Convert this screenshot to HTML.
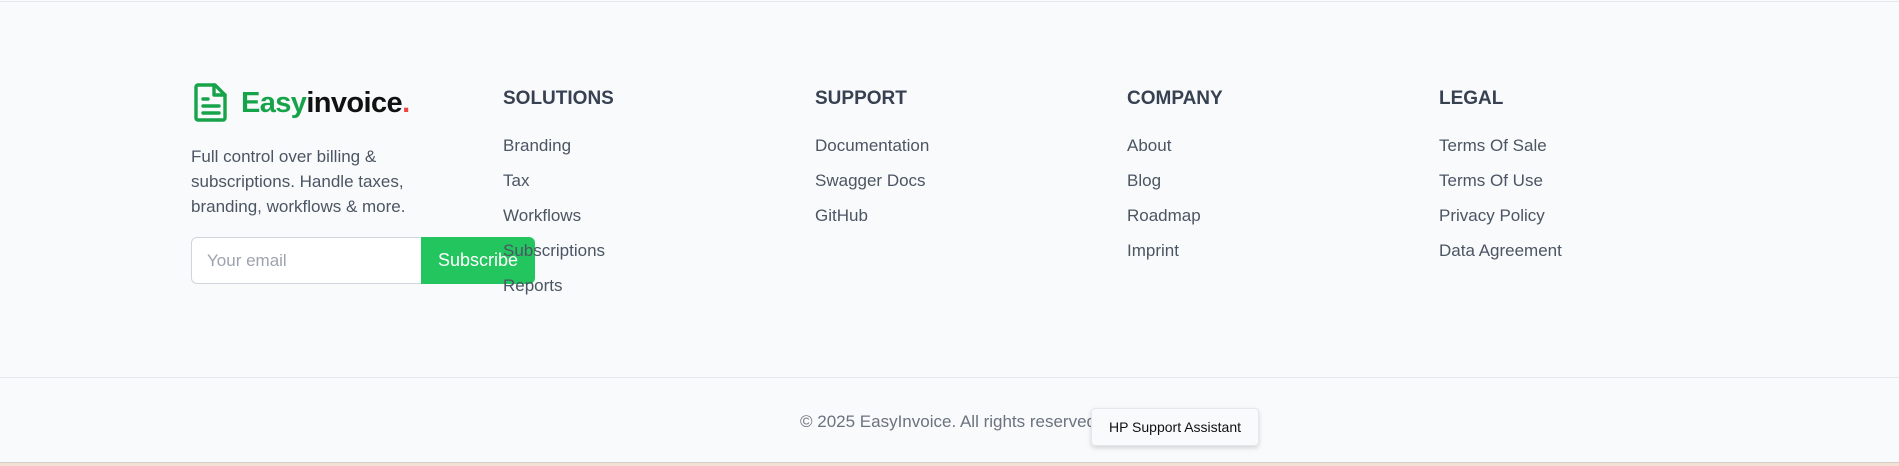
<!DOCTYPE html>
<html><head><meta charset="utf-8"><style>
*{margin:0;padding:0;box-sizing:border-box}
body{width:1899px;height:466px;background:#f9fafb;font-family:"Liberation Sans",sans-serif;position:relative;overflow:hidden;color:#4b5563}
.a{position:absolute;white-space:nowrap}
.h{font-size:19px;font-weight:bold;color:#374151;top:88px}
.i{font-size:17px;color:#4b5563;line-height:20px}
</style></head><body>
<div class="a" style="left:0;top:1px;width:1899px;height:1px;background:#e5e7eb"></div>
<svg class="a" style="left:194px;top:82px" width="34" height="40" viewBox="0 0 34 40" fill="none" stroke="#16a34a" stroke-width="3.4" stroke-linejoin="round" stroke-linecap="round"><path d="M4 3h17l10 10v23a2 2 0 0 1-2 2H4a2 2 0 0 1-2-2V5a2 2 0 0 1 2-2z"/><path d="M20 3v10h11"/><path d="M9 17h5M9 24h16M9 31h16"/></svg>
<div class="a" style="left:241px;top:87px;font-size:29px;font-weight:bold;letter-spacing:-0.6px"><span style="color:#16a34a">Easy</span><span style="color:#111">invoice</span><span style="color:#ef4444">.</span></div>
<div class="a" style="left:191px;top:144px;font-size:17px;line-height:25px;color:#4b5563">Full control over billing &amp;<br>subscriptions. Handle taxes,<br>branding, workflows &amp; more.</div>
<div class="a" style="left:191px;top:237px;width:232px;height:47px;background:#fff;border:1px solid #d1d5db;border-radius:6px 0 0 6px"></div>
<div class="a" style="left:207px;top:251px;font-size:17px;color:#9ca3af">Your email</div>
<div class="a" style="left:421px;top:237px;width:114px;height:47px;background:#22c55e;border-radius:0 6px 6px 0;color:#fff;font-size:18px;line-height:47px;text-align:center">Subscribe</div>
<div class="a h" style="left:503px">SOLUTIONS</div>
<div class="a h" style="left:815px">SUPPORT</div>
<div class="a h" style="left:1127px">COMPANY</div>
<div class="a h" style="left:1439px">LEGAL</div>
<div class="a i" style="left:503px;top:136px">Branding</div>
<div class="a i" style="left:503px;top:171px">Tax</div>
<div class="a i" style="left:503px;top:206px">Workflows</div>
<div class="a i" style="left:503px;top:241px">Subscriptions</div>
<div class="a i" style="left:503px;top:276px">Reports</div>
<div class="a i" style="left:815px;top:136px">Documentation</div>
<div class="a i" style="left:815px;top:171px">Swagger Docs</div>
<div class="a i" style="left:815px;top:206px">GitHub</div>
<div class="a i" style="left:1127px;top:136px">About</div>
<div class="a i" style="left:1127px;top:171px">Blog</div>
<div class="a i" style="left:1127px;top:206px">Roadmap</div>
<div class="a i" style="left:1127px;top:241px">Imprint</div>
<div class="a i" style="left:1439px;top:136px">Terms Of Sale</div>
<div class="a i" style="left:1439px;top:171px">Terms Of Use</div>
<div class="a i" style="left:1439px;top:206px">Privacy Policy</div>
<div class="a i" style="left:1439px;top:241px">Data Agreement</div>
<div class="a" style="left:0;top:377px;width:1899px;height:1px;background:#e5e7eb"></div>
<div class="a" style="left:800px;top:412px;font-size:17px;color:#6b7280">© 2025 EasyInvoice. All rights reserved.</div>
<div class="a" style="left:1091px;top:408px;width:168px;height:38px;background:#f9fafb;border:1px solid #e5e7eb;border-radius:4px;box-shadow:0 2px 5px rgba(0,0,0,.15);font-size:14px;color:#111;line-height:36px;text-align:center">HP Support Assistant</div>
<div class="a" style="left:0;top:462px;width:1899px;height:1px;background:#d6cfc8"></div>
<div class="a" style="left:0;top:463px;width:1899px;height:3px;background:#f3e1d6"></div>
</body></html>
